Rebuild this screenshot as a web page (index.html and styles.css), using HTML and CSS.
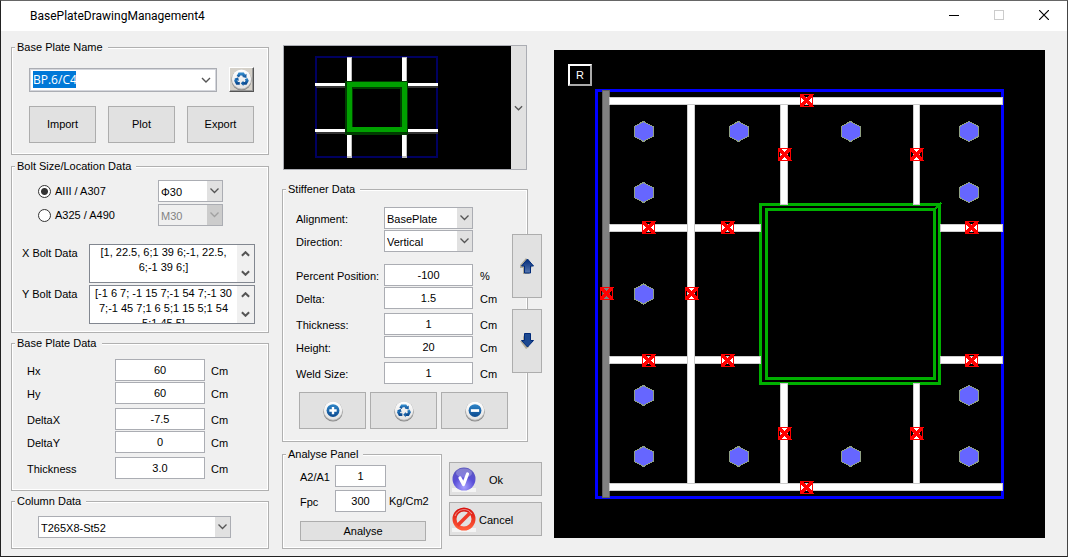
FILE: index.html
```html
<!DOCTYPE html>
<html lang="en">
<head>
<meta charset="utf-8">
<title>BasePlateDrawingManagement4</title>
<link rel="stylesheet" href="styles.css">
</head>
<body>
<svg class="defs" width="0" height="0" aria-hidden="true">
  <defs>
    <linearGradient id="disc" x1="0" y1="0" x2="0" y2="1"><stop offset="0" stop-color="#fff"/><stop offset="1" stop-color="#e2e2e2"/></linearGradient>
    <linearGradient id="blue" x1="0" y1="0" x2="0" y2="1"><stop offset="0" stop-color="#2f86c8"/><stop offset="1" stop-color="#0b4a90"/></linearGradient>
    <linearGradient id="arrow" x1="0" y1="0" x2="0" y2="1"><stop offset="0" stop-color="#002a78"/><stop offset="1" stop-color="#5878b0"/></linearGradient>
    <radialGradient id="violet" cx="0.5" cy="0.85" r="0.9"><stop offset="0" stop-color="#a9a2ff"/><stop offset="0.5" stop-color="#5a4fd8"/><stop offset="1" stop-color="#5b57b8"/></radialGradient>
    <linearGradient id="red" x1="0" y1="0" x2="0" y2="1"><stop offset="0" stop-color="#d81410"/><stop offset="1" stop-color="#ff5a38"/></linearGradient>
    <symbol id="base" viewBox="0 0 24 24">
      <circle cx="12" cy="13" r="10.5" fill="#8a8a8a"/>
      <circle cx="12" cy="12" r="10.5" fill="#b4b4b4"/>
      <circle cx="12" cy="11.5" r="10" fill="url(#disc)"/>
    </symbol>
    <symbol id="recycle" viewBox="0 0 24 24">
      <use href="#base"/>
      <g fill="none" stroke="url(#blue)" stroke-width="3">
        <path d="M8.2 9L9.800 6.300H13.600L14.800 8.200"/>
        <path d="M16.800 11L17.900 13.300L16.400 16H13.400"/>
        <path d="M10.200 16H7.400L6 13.300L7 11.400"/>
      </g>
      <g fill="#1660a8">
        <path d="M17.200 6V10.400L12.800 9.300Z"/>
        <path d="M14 13.200V18.800L11.200 16Z"/>
        <path d="M4.400 11.400L8.500 9.600L9.300 13.400Z"/>
      </g>
    </symbol>
    <symbol id="plus" viewBox="0 0 24 24"><use href="#base"/><circle cx="12" cy="11.5" r="7" fill="url(#blue)"/><path d="M12 7.500V15.500M8 11.500H16" stroke="#fff" stroke-width="2.600"/></symbol>
    <symbol id="minus" viewBox="0 0 24 24"><use href="#base"/><circle cx="12" cy="11.5" r="7" fill="url(#blue)"/><path d="M7.500 11.500H16.500" stroke="#fff" stroke-width="3"/></symbol>
    <symbol id="chev" viewBox="0 0 10 6"><path d="M1 1L5 5L9 1" fill="none" stroke="#555" stroke-width="1.400"/></symbol>
    <symbol id="chev-bold" viewBox="0 0 10 6"><path d="M1 1L5 5L9 1" fill="none" stroke="#555" stroke-width="2.200"/></symbol>
    <polygon id="bolt" points="0,-10 9.500,-5 9.500,5 0,10 -9.500,5 -9.500,-5" fill="#6666ff" stroke="#8fa083"/>
    <g id="mark" stroke="#f00" fill="none">
      <rect x="-6" y="-6" width="12" height="12"/>
      <path d="M-5.500 -5.500L5.500 5.500M5.500 -5.500L-5.500 5.500" stroke-width="3.400"/>
      <path d="M-7 -6H-3M3 -6H7M-7 6H-3M3 6H7" stroke-width="1"/>
    </g>
  </defs>
</svg>

<div class="window">
  <header class="titlebar">
    <h1>BasePlateDrawingManagement4</h1>
    <div class="controls">
      <button aria-label="Minimize"><svg width="10" height="10"><path d="M0 5.500H10" stroke="#000"/></svg></button>
      <button aria-label="Maximize" disabled><svg width="10" height="10"><rect x="0.500" y="0.500" width="9" height="9" fill="none" stroke="#ccc"/></svg></button>
      <button aria-label="Close"><svg width="10" height="10"><path d="M0 0L10 10M10 0L0 10" stroke="#000" stroke-width="1.200"/></svg></button>
    </div>
  </header>

  <main>
    <div class="left">
      <fieldset class="plate-name">
        <legend>Base Plate Name</legend>
        <div class="name-row">
          <div class="combo">
            <input value="BP.6/C4" aria-label="Base plate name">
            <svg width="10" height="6"><use href="#chev"/></svg>
          </div>
          <button class="raised" aria-label="Refresh"><svg width="23" height="23"><use href="#recycle"/></svg></button>
        </div>
        <div class="buttons">
          <button class="btn">Import</button><button class="btn">Plot</button><button class="btn">Export</button>
        </div>
      </fieldset>

      <fieldset class="bolts">
        <legend>Bolt Size/Location Data</legend>
        <div class="grade">
          <label><input type="radio" name="grade" checked>AIII / A307</label>
          <select aria-label="AIII size"><option>Φ30</option></select>
          <label><input type="radio" name="grade">A325 / A490</label>
          <select aria-label="A325 size" disabled><option>M30</option></select>
        </div>
        <div class="locations">
          <label for="xb">X Bolt Data</label>
          <div class="memo">
            <textarea id="xb">[1, 22.5, 6;1 39 6;-1, 22.5,
6;-1 39 6;]</textarea>
            <div class="scroll"><button aria-label="Scroll up"><svg class="flip" width="9" height="6"><use href="#chev-bold"/></svg></button><button aria-label="Scroll down"><svg width="9" height="6"><use href="#chev-bold"/></svg></button></div>
          </div>
          <label for="yb">Y Bolt Data</label>
          <div class="memo">
            <textarea id="yb">[-1 6 7; -1 15 7;-1 54 7;-1 30
7;-1 45 7;1 6 5;1 15 5;1 54
5;1 45 5]</textarea>
            <div class="scroll"><button aria-label="Scroll up"><svg class="flip" width="9" height="6"><use href="#chev-bold"/></svg></button><button aria-label="Scroll down"><svg width="9" height="6"><use href="#chev-bold"/></svg></button></div>
          </div>
        </div>
      </fieldset>

      <fieldset class="plate-data">
        <legend>Base Plate Data</legend>
        <div class="rows">
          <div class="row"><label for="hx">Hx</label><input id="hx" value="60"><span>Cm</span></div>
          <div class="row"><label for="hy">Hy</label><input id="hy" value="60"><span>Cm</span></div>
        </div>
        <div class="rows">
          <div class="row"><label for="dx">DeltaX</label><input id="dx" value="-7.5"><span>Cm</span></div>
          <div class="row"><label for="dy">DeltaY</label><input id="dy" value="0"><span>Cm</span></div>
        </div>
        <div class="rows">
          <div class="row"><label for="th">Thickness</label><input id="th" value="3.0"><span>Cm</span></div>
        </div>
      </fieldset>

      <fieldset class="column-data">
        <legend>Column Data</legend>
        <select aria-label="Column section"><option>T265X8-St52</option></select>
      </fieldset>
    </div>

    <div class="middle">
      <button class="preview" aria-label="Stiffener layout">
        <svg viewBox="284 46 227 123" shape-rendering="crispEdges">
          <rect x="284" y="46" width="227" height="123"/>
          <rect x="316" y="57" width="121" height="100" fill="none" stroke="#000060" stroke-width="2"/>
          <path d="M316 87H438M316 133H438" stroke="#333" stroke-width="2"/>
          <path d="M315 84.500H438M315 130.500H438" stroke="#fff" stroke-width="3"/>
          <path d="M349.500 57V158M404.500 57V158" stroke="#bbb" stroke-width="5"/>
          <path d="M349 58V156M404 58V156" stroke="#fff" stroke-width="4"/>
          <rect x="349" y="85" width="55" height="46" fill="none" stroke="#003c00" stroke-width="8"/>
          <rect x="349.500" y="84.500" width="55" height="45" fill="none" stroke="#00a000" stroke-width="5"/>
        </svg>
        <span class="drop"><svg width="9" height="6"><use href="#chev"/></svg></span>
      </button>

      <div class="stiffener-wrap">
        <fieldset class="stiffener">
          <legend>Stiffener Data</legend>
          <div class="rows">
            <div class="row"><label for="al">Alignment:</label><select id="al"><option>BasePlate</option></select></div>
            <div class="row"><label for="di">Direction:</label><select id="di"><option>Vertical</option></select></div>
          </div>
          <div class="rows">
            <div class="row"><label for="pp">Percent Position:</label><input id="pp" value="-100"><span>%</span></div>
            <div class="row"><label for="de">Delta:</label><input id="de" value="1.5"><span>Cm</span></div>
          </div>
          <div class="rows">
            <div class="row"><label for="st">Thickness:</label><input id="st" value="1"><span>Cm</span></div>
            <div class="row"><label for="he">Height:</label><input id="he" value="20"><span>Cm</span></div>
          </div>
          <div class="rows">
            <div class="row"><label for="ws">Weld Size:</label><input id="ws" value="1"><span>Cm</span></div>
          </div>
          <div class="buttons">
            <button class="btn" aria-label="Add"><svg width="22" height="22"><use href="#plus"/></svg></button>
            <button class="btn" aria-label="Update"><svg width="22" height="22"><use href="#recycle"/></svg></button>
            <button class="btn" aria-label="Remove"><svg width="22" height="22"><use href="#minus"/></svg></button>
          </div>
        </fieldset>
        <div class="movers">
          <button class="btn" aria-label="Move up"><svg width="14" height="16"><path d="M6 0L0 7V10H3V16H9L12 8Z" fill="#b0ab98"/><path d="M7.500 1L13.500 8H10.500V15H4.500V8H1.500Z" fill="url(#arrow)" stroke="#002a78"/></svg></button>
          <button class="btn" aria-label="Move down"><svg width="14" height="16"><path d="M3 2V8H0L6 16L9 14Z" fill="#b0ab98"/><path d="M7.500 14L13.500 7.500H10.500V0.500H4.500V7.500H1.500Z" fill="#1c4890" stroke="#002a78"/></svg></button>
        </div>
      </div>

      <div class="bottom">
        <fieldset class="analyse">
          <legend>Analyse Panel</legend>
          <div class="row"><label for="aa">A2/A1</label><input id="aa" value="1"></div>
          <div class="row"><label for="fp">Fpc</label><input id="fp" value="300"><span>Kg/Cm2</span></div>
          <button class="btn">Analyse</button>
        </fieldset>
        <div class="actions">
          <button class="btn"><svg width="24" height="25"><rect y="21" width="24" height="4" fill="#f4f4f4"/><circle cx="12" cy="12" r="11.500" fill="url(#violet)"/><ellipse cx="12" cy="6" rx="8" ry="4.500" fill="#fff" opacity="0.250"/><path d="M8 11L11.500 17.500L15.500 7" fill="none" stroke="#fff" stroke-width="3.200" stroke-linecap="round" stroke-linejoin="round"/></svg><span>Ok</span></button>
          <button class="btn"><svg width="24" height="25"><rect y="21" width="24" height="4" fill="#f4f4f4"/><circle cx="12" cy="12" r="9.500" fill="none" stroke="url(#red)" stroke-width="4"/><path d="M5.500 18.500L18.500 5.500" stroke="#f03a28" stroke-width="3.500"/><path d="M3 9A9.500 9.500 0 0 1 20 7" fill="none" stroke="#fff" stroke-width="1" opacity="0.500"/></svg><span>Cancel</span></button>
        </div>
      </div>
    </div>

    <div class="canvas">
      <svg viewBox="554 50 491 488" role="img" aria-label="Base plate plan">
        <g shape-rendering="crispEdges">
          <rect x="596.500" y="90.500" width="406" height="407" fill="none" stroke="#00f" stroke-width="3"/>
          <rect x="602.500" y="90.500" width="7" height="407" fill="#808080" stroke="#606060"/>
          <g fill="none" stroke="#00b000" stroke-width="3">
            <rect x="760.500" y="204.500" width="179" height="179"/>
            <rect x="766.500" y="209.500" width="168" height="169"/>
            <path d="M935 209L941 203" stroke-width="2"/>
          </g>
          <g fill="#fff" stroke="#ccc">
            <rect x="687.500" y="104.500" width="7" height="379"/>
            <rect x="780.500" y="104.500" width="7" height="100"/>
            <rect x="913.500" y="104.500" width="6" height="100"/>
            <rect x="780.500" y="383.500" width="7" height="100"/>
            <rect x="913.500" y="383.500" width="6" height="100"/>
            <rect x="609.500" y="97.500" width="393" height="7"/>
            <rect x="609.500" y="483.500" width="393" height="7"/>
            <rect x="609.500" y="224.500" width="78" height="7"/>
            <rect x="694.500" y="224.500" width="66" height="7"/>
            <rect x="940.500" y="224.500" width="62" height="7"/>
            <rect x="609.500" y="356.500" width="78" height="7"/>
            <rect x="694.500" y="356.500" width="66" height="7"/>
            <rect x="940.500" y="356.500" width="62" height="7"/>
          </g>
          <use href="#bolt" x="643.500" y="131.500"/><use href="#bolt" x="643.500" y="192.500"/><use href="#bolt" x="643.500" y="294"/><use href="#bolt" x="643.500" y="395.500"/><use href="#bolt" x="643.500" y="456.500"/>
          <use href="#bolt" x="738.500" y="131.500"/><use href="#bolt" x="738.500" y="456.500"/>
          <use href="#bolt" x="850.500" y="131.500"/><use href="#bolt" x="850.500" y="456.500"/>
          <use href="#bolt" x="969" y="131.500"/><use href="#bolt" x="969" y="192.500"/><use href="#bolt" x="969" y="395.500"/><use href="#bolt" x="969" y="456.500"/>
          <use href="#mark" x="806.500" y="100.500"/><use href="#mark" x="784.500" y="154.500"/><use href="#mark" x="916.500" y="154.500"/>
          <use href="#mark" x="648.500" y="227.500"/><use href="#mark" x="727.500" y="227.500"/><use href="#mark" x="971.500" y="227.500"/>
          <use href="#mark" x="606.500" y="293.500"/><use href="#mark" x="691.500" y="293.500"/>
          <use href="#mark" x="648.500" y="360.500"/><use href="#mark" x="727.500" y="360.500"/><use href="#mark" x="971.500" y="360.500"/>
          <use href="#mark" x="784.500" y="433.500"/><use href="#mark" x="916.500" y="433.500"/><use href="#mark" x="806.500" y="487.500"/>
        </g>
      </svg>
      <button class="reset">R</button>
    </div>
  </main>
</div>
</body>
</html>
```
FILE: styles.css
```css
* { box-sizing: border-box; }
body { margin: 0; font: 11px/13px "Liberation Sans", Arial, sans-serif; color: #000; }
button, input, select, textarea { font: inherit; color: inherit; margin: 0; padding: 0; border-radius: 0; outline: 0; }
svg { display: block; }
.defs { position: absolute; }

.window { min-height: 100vh; background: #f0f0f0; border: 1px solid #222; border-top-color: #666; border-right-color: #444; }
.titlebar { display: flex; justify-content: space-between; height: 30px; background: #fff; }
.titlebar h1 { margin: 0; padding-left: 29px; font: 12px/30px Roboto, sans-serif; }
.controls { display: flex; padding-right: 1px; height: 28px; }
.controls button { width: 45px; border: 0; background: none; display: flex; align-items: center; justify-content: center; }

main { display: grid; grid-template-columns: 258px 259px 1fr; column-gap: 13px; align-items: start; padding: 10px 22px 6px 10px; }
.left { display: flex; flex-direction: column; gap: 4px; }
.middle { display: flex; flex-direction: column; padding-top: 4px; }

fieldset { --indent: 10px; min-width: 0; margin: 0; padding: 0 0 0 var(--indent); border: 1px solid #b0b0b0; box-shadow: inset 0 0 0 1px #fff; }
legend { margin-left: calc(3px - var(--indent)); padding: 0 5px 0 2px; height: 13px; background: #f0f0f0; }
.buttons { display: flex; }
.btn { display: flex; align-items: center; justify-content: center; background: #e1e1e1; border: 1px solid #adadad; }
.buttons .btn { width: 67px; height: 37px; }

input:not([type]) { min-width: 0; height: 22px; background: #fff; border: 1px solid #abadb3; text-align: center; }
select {
  appearance: none; height: 22px; border: 1px solid #abadb3; padding: 2px 16px 0 2px;
  background: url("data:image/svg+xml,%3Csvg xmlns='http://www.w3.org/2000/svg' width='9' height='6'%3E%3Cpath d='M.5 .5L4.500 4.500L8.500 .5' fill='none' stroke='%23555' stroke-width='1.300'/%3E%3C/svg%3E") right 3px center no-repeat,
    linear-gradient(#e1e1e1, #e1e1e1) right / 15px 100% no-repeat, #fff;
}
select:disabled {
  color: #838383; opacity: 1;
  background: url("data:image/svg+xml,%3Csvg xmlns='http://www.w3.org/2000/svg' width='9' height='6'%3E%3Cpath d='M.5 .5L4.500 4.500L8.500 .5' fill='none' stroke='%23a0a0a0' stroke-width='1.300'/%3E%3C/svg%3E") right 3px center no-repeat,
    linear-gradient(#ccc, #ccc) right / 15px 100% no-repeat, #f0f0f0;
}

.rows { display: grid; gap: 1px; }
.row { display: grid; align-items: center; }
.row label, .row span { padding-top: 3px; white-space: nowrap; }

.plate-name { --indent: 17px; padding-top: 13px; padding-right: 14px; padding-bottom: 11px; margin-bottom: 1px; }
.name-row { display: flex; justify-content: space-between; align-items: center; height: 25px; margin-bottom: 14px; }
.combo { display: flex; align-items: center; justify-content: space-between; width: 188px; height: 24px; padding: 0 5px 0 3px; background: #fff; border: 1px solid #abadb3; outline: 1px solid #d4d6dc; outline-offset: -2px; }
.combo input:not([type]) { width: 43px; height: 17px; padding: 0; border: 0; background: #0078d7; color: #fff; font: 12px/17px "Open Sans", sans-serif; text-align: left; }
.raised { display: flex; align-items: center; justify-content: center; width: 25px; height: 25px; background: #d4d0c8; border: 1px solid; border-color: #fff #555 #555 #fff; box-shadow: inset -1px -1px #999; }
.plate-name .buttons { justify-content: space-between; }

.bolts { padding-top: 7px; padding-right: 13px; padding-bottom: 8px; }
.grade { display: grid; grid-template-columns: 120px 65px; row-gap: 2px; align-items: center; padding-left: 16px; margin-bottom: 18px; }
.grade label { display: flex; align-items: center; gap: 4px; }
input[type=radio] { appearance: none; width: 13px; height: 13px; border: 1px solid #333; border-radius: 50%; background: #fff; }
input[type=radio]:checked { background: radial-gradient(circle, #333 3px, #fff 4px); }
.locations { display: grid; grid-template-columns: 67px 1fr; row-gap: 2px; }
.locations label { padding-top: 3px; }
.memo { display: flex; height: 39px; background: #fff; border: 1px solid #828790; }
.memo textarea { flex: 1; min-width: 0; border: 0; background: none; resize: none; overflow: hidden; white-space: pre; text-align: center; line-height: 15px; }
.scroll { display: flex; flex-direction: column; width: 17px; background: #f0f0f0; }
.scroll button { flex: 1; display: flex; align-items: center; justify-content: center; border: 0; background: none; }
.flip { transform: rotate(180deg); }

.plate-data { --indent: 15px; padding-top: 9px; padding-bottom: 11px; }
.plate-data .rows { margin-bottom: 4px; }
.plate-data .rows:last-child { margin-bottom: 0; }
.plate-data .row { grid-template-columns: 88px 90px 1fr; }
.plate-data .row span { padding-left: 6px; }
.column-data { --indent: 26px; padding-top: 8px; padding-bottom: 10px; }
.column-data select { display: block; width: 193px; }

.preview { display: flex; width: 244px; height: 125px; margin: 0 0 13px 1px; border: 1px solid #abadb3; background: #e1e1e1; }
.preview > svg { width: 227px; height: 123px; }
.drop { flex: 1; align-self: center; display: flex; justify-content: center; }

.stiffener-wrap { position: relative; margin-bottom: 6px; }
.stiffener { --indent: 13px; width: 246px; padding-top: 11px; padding-bottom: 12px; }
.stiffener .rows { margin-bottom: 4px; }
.stiffener .rows:nth-of-type(1) { margin-bottom: 12px; }
.stiffener .row { grid-template-columns: 88px 89px 1fr; }
.stiffener .row span { padding-left: 7px; }
.stiffener .buttons { gap: 4px; padding: 4px 0 0 3px; }
.movers { position: absolute; top: 51px; right: -1px; display: grid; gap: 11px; }
.movers .btn { width: 30px; height: 64px; }

.bottom { display: grid; grid-template-columns: 160px 93px; gap: 7px; }
.analyse { --indent: 17px; padding-top: 4px; padding-bottom: 7px; }
.analyse .row { grid-template-columns: 35px 51px 1fr; margin-bottom: 3px; }
.analyse .row span { padding: 0 0 0 3px; }
.analyse .btn { width: 126px; height: 20px; margin-top: 9px; }
.actions { display: grid; align-content: start; gap: 6px; padding-top: 14px; }
.actions .btn { height: 34px; justify-content: flex-start; padding-left: 2px; }
.actions span { padding: 3px 0 0 3px; }
.actions .btn:first-child span { padding-left: 13px; }

.canvas { position: relative; margin-top: 9px; background: #000; }
.canvas svg { width: 100%; height: auto; }
.reset { position: absolute; left: 14px; top: 14px; width: 24px; height: 22px; background: #000; color: #fff; border: 2px solid; border-color: #fff #aaa #aaa #fff; }
```
